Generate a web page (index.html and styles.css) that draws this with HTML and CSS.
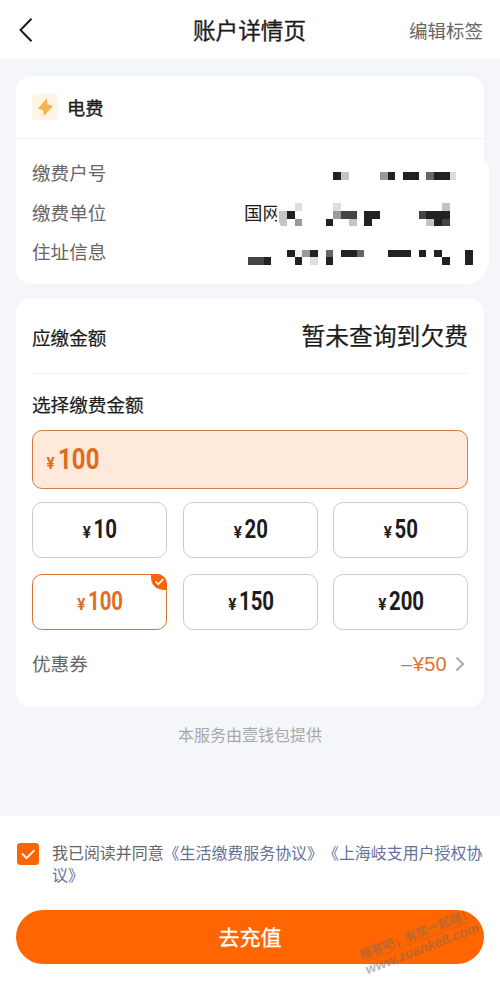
FILE: index.html
```html
<!DOCTYPE html>
<html lang="zh-CN">
<head>
<meta charset="utf-8">
<title>账户详情页</title>
<link rel="stylesheet" href="styles.css">
</head>
<body>
<header class="nav">
  <svg class="back" width="16" height="26" viewBox="0 0 16 26"><path d="M13.5 1.8 2.5 13l11 11.2"/></svg>
  <h1>账户详情页</h1>
  <a class="edit">编辑标签</a>
</header>
<main>
  <section class="card account">
    <div class="kind">
      <span class="bolt"><svg width="26" height="26" viewBox="0 0 26 26"><path d="M15 4 6 14.4l5.2 2L11.8 22 21 12l-5.6-1.7z"/></svg></span>
      <b>电费</b>
    </div>
    <dl class="info">
      <div><dt>缴费户号</dt></div>
      <div><dt>缴费单位</dt><dd>国网</dd></div>
      <div><dt>住址信息</dt></div>
    </dl>
    <div class="cover"></div>
    <svg class="mosaic" width="225" height="93" viewBox="0 0 29 12" shape-rendering="crispEdges">
      <path fill="#fff" d="M3.7 3.8h3v2.6h-3z"/>
      <g fill="#222">
        <path d="M11 0h1v1h-1zM18 0h1v1h-1zM20 0h2v1h-2zM24 0h2v1h-2z"/>
        <path d="M5 5h1v1h-1zM15 5h2v1h-2zM23 5h3v1h-3zM10 6h1v1h-1zM15 6h1v1h-1zM24 6h1v1h-1z"/>
        <path d="M5 10h1v1h-1zM8 10h1v1h-1zM12 10h2v1h-2zM18 10h3v1h-3zM22 10h1v1h-1zM24 10h1v1h-1zM28 10h1v2h-1z"/>
        <path d="M2 11h1v1h-1zM6 11h1v1h-1zM10 11h1v1h-1zM25 11h1v1h-1z"/>
      </g>
      <path fill="#444" d="M12 5h2v1h-2zM22 5h1v1h-1zM25 6h1v1h-1zM0 11h2v1h-2z"/>
      <path fill="#666" d="M23 0h1v1h-1zM10 10h1v1h-1zM14 10h1v1h-1z"/>
      <path fill="#999" d="M17 0h1v1h-1zM11 5h1v1h-1zM6 6h1v1h-1zM7 10h1v1h-1z"/>
      <path fill="#c4c4c4" d="M12 0h1v1h-1zM25 4h1v1h-1zM4 5h1v1h-1zM4 6h1v1h-.6q-.4-.3-.4-.6zM13 6h1v1h-1zM23 6h1v1h-1z"/>
      <path fill="#dedede" d="M26 0h.8v1h-.8zM6 4h1v1h-1zM11 4h1v1h-1zM8 11h1v1h-1z"/>
      <path fill="#f3f3f3" d="M6 10h1v1h-1z"/>
    </svg>
  </section>

  <section class="card pay">
    <div class="due"><span>应缴金额</span><strong>暂未查询到欠费</strong></div>
    <h2>选择缴费金额</h2>
    <div class="field"><span class="price"><i>¥</i>100</span></div>
    <div class="options">
      <div class="option"><span class="price"><i>¥</i>10</span></div>
      <div class="option"><span class="price"><i>¥</i>20</span></div>
      <div class="option"><span class="price"><i>¥</i>50</span></div>
      <div class="option selected"><span class="price"><i>¥</i>100</span>
        <svg class="tick" width="16" height="16" viewBox="0 0 16 16"><path fill="#fb6404" d="M0 0h7q9 0 9 9v7h-3Q0 15 0 3z"/><path class="mark" d="m4.5 7.5 2.8 2.7 5-5"/></svg>
      </div>
      <div class="option"><span class="price"><i>¥</i>150</span></div>
      <div class="option"><span class="price"><i>¥</i>200</span></div>
    </div>
    <div class="coupon"><span>优惠券</span><em>–¥50</em><svg width="10" height="16" viewBox="0 0 10 16"><path d="m1.5 1.5 6.5 6.5-6.5 6.5"/></svg></div>
  </section>
  <p class="provider">本服务由壹钱包提供</p>
</main>
<footer>
  <div class="agree">
    <svg class="check" width="22" height="22" viewBox="0 0 22 22"><rect width="22" height="22" rx="3.5"/><path d="m5 10.5 4.5 4.6 8-8"/></svg>
    <p>我已阅读并同意<a>《生活缴费服务协议》《上海岐支用户授权协议》</a></p>
  </div>
  <div class="submit">去充值</div>
  <div class="watermark"><span>赚客吧，有奖一起赚！</span><span class="site">www.zuanke8.com</span></div>
</footer>
</body>
</html>
```

FILE: styles.css
```css
* { box-sizing: border-box; margin: 0; padding: 0; }
body {
  width: 500px; height: 995px; overflow: hidden;
  display: flex; flex-direction: column;
  background: #f4f6f9; color: #1c1c1c;
  font-family: "Noto Sans CJK SC", sans-serif; font-size: 18.6px;
  text-spacing-trim: space-all;
}
svg { display: block; flex: none; }
.nav {
  height: 59px; flex: none; padding: 0 17px 0 18px; background: #fff;
  display: grid; grid-template-columns: 78px 1fr 80px; align-items: center;
}
.back { fill: none; stroke: #1c1c1c; stroke-width: 2; }
h1 { font-size: 22.6px; font-weight: 400; line-height: 30px; text-align: center; -webkit-text-stroke: .3px; }
.edit { color: #666; font-size: 18.5px; text-align: right; white-space: nowrap; }
main { flex: 1; padding: 17px 16px 0; }
.card { background: #fff; border-radius: 15px; }
.account { position: relative; height: 208px; }
.kind { height: 63px; padding: 0 16px; display: flex; align-items: center; gap: 9px; border-bottom: 1px solid #f0f1f3; }
.kind b { font-weight: 400; font-size: 18.2px; -webkit-text-stroke: .4px; }
.bolt { width: 26px; height: 26px; border-radius: 4px; background: #fff5e5; }
.bolt path { fill: #f7b34f; }
.info { padding: 13px 16px 0; }
.info > div { display: flex; height: 39.5px; line-height: 40px; }
.info dt { width: 212px; color: #666; }
.info dd { white-space: nowrap; font-size: 18.5px; }
.cover { position: absolute; right: -5px; top: 87px; width: 20px; height: 118px; background: #fff; border-radius: 6px 4px 20px 0; }
.mosaic { position: absolute; left: 232px; top: 96px; }
.pay { margin-top: 14px; height: 409px; padding: 0 16px; }
.due { height: 76px; border-bottom: 1px solid #f1f2f4; display: flex; align-items: center; justify-content: space-between; }
.due span, h2 { font-size: 18.6px; font-weight: 400; -webkit-text-stroke: .2px; }
.due span { padding-top: 1px; }
.due strong { font-size: 23.8px; font-weight: 400; -webkit-text-stroke: .2px; padding-bottom: 2px; }
h2 { height: 56px; line-height: 60px; }
.field {
  height: 59px; border: 1.5px solid #cf7c48; border-radius: 10px; background: #fee9da;
  display: flex; align-items: center; padding: 3px 0 0 14px; color: #df6c1d;
}
.price { font: 700 25.5px/30px Roboto, sans-serif; display: inline-flex; align-items: baseline; gap: 4px; transform: scaleX(.8); }
.price i { font-style: normal; font-size: 16.5px; transform: scaleX(1.15); }
.field .price { font-size: 30px; transform-origin: left; gap: 5px; }
.options { margin-top: 13px; display: grid; grid-template-columns: repeat(3, 135px); justify-content: space-between; row-gap: 16px; }
.option { position: relative; height: 56px; border: 1px solid #ccc; border-radius: 10px; display: flex; align-items: center; justify-content: center; padding: 2px 0 0 2px; }
.selected { border: 1.5px solid #da7538; color: #dc7027; }
.tick { position: absolute; right: -1px; top: -1px; border-top-right-radius: 10px; }
.mark { fill: none; stroke: #fff; stroke-width: 1.7; }
.coupon { height: 68px; display: flex; align-items: center; color: #666; }
.coupon span { margin-top: -3px; }
.coupon em { margin-left: auto; font: 20px "Liberation Sans", sans-serif; letter-spacing: .3px; color: #dc7430; }
.coupon svg { margin: 0 3px 0 8px; fill: none; stroke: #aaa; stroke-width: 2; }
.provider { margin-top: 15px; text-align: center; color: #a8a9ab; font-size: 16px; line-height: 24px; }
footer { position: relative; height: 179px; flex: none; padding: 27px 16px 0; background: #fff; }
.agree { display: flex; gap: 13px; height: 67px; padding-left: 1px; }
.check rect { fill: #fb6404; }
.check path { fill: none; stroke: #fff; stroke-width: 1.8; }
.agree p { width: 434px; margin-top: -2px; font-size: 15.95px; line-height: 22px; color: #666; word-break: break-all; line-break: anywhere; }
.agree a { color: #63719b; }
.submit { height: 54px; border-radius: 27px; background: #ff6500; color: #fff; font-size: 21px; line-height: 52px; text-align: center; -webkit-text-stroke: .3px; }
.watermark {
  position: absolute; left: 359px; top: 108px; width: 118px;
  transform: rotate(-21deg); color: rgba(120, 105, 95, .5);
  font-size: 12px; font-weight: 700; line-height: 17px; white-space: nowrap;
}
.watermark span { display: block; }
.watermark .site { font: italic 700 13.6px/16px "Liberation Sans", sans-serif; border-top: 1px solid rgba(120, 105, 95, .3); }
```
